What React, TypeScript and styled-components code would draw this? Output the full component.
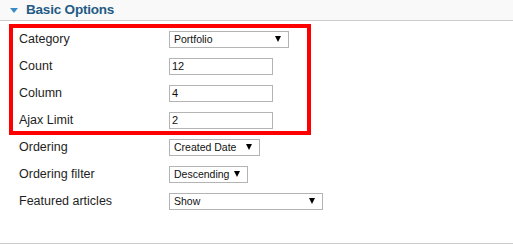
import React from 'react';
import styled, { createGlobalStyle } from 'styled-components';

const GlobalStyle = createGlobalStyle`
  html, body {
    margin: 0;
    padding: 0;
    background: #ffffff;
    font-family: 'Liberation Sans', Arial, sans-serif;
  }
`;

type Field =
  | { label: string; kind: 'select'; value: string; width: number }
  | { label: string; kind: 'input'; value: string; width: number };

const highlighted: Field[] = [
  { label: 'Category', kind: 'select', value: 'Portfolio', width: 120 },
  { label: 'Count', kind: 'input', value: '12', width: 104 },
  { label: 'Column', kind: 'input', value: '4', width: 104 },
  { label: 'Ajax Limit', kind: 'input', value: '2', width: 104 },
];

const others: Field[] = [
  { label: 'Ordering', kind: 'select', value: 'Created Date', width: 91 },
  { label: 'Ordering filter', kind: 'select', value: 'Descending', width: 79 },
  { label: 'Featured articles', kind: 'select', value: 'Show', width: 154 },
];

const FieldRow: React.FC<{ field: Field }> = ({ field }) => (
  <Row>
    <Label>{field.label}</Label>
    {field.kind === 'select' ? (
      <Select width={field.width}>
        <span>{field.value}</span>
        <Arrow />
      </Select>
    ) : (
      <TextInput width={field.width}>{field.value}</TextInput>
    )}
  </Row>
);

const App: React.FC = () => (
  <>
    <GlobalStyle />
    <Panel>
      <Header>
        <Caret />
        <Title>Basic Options</Title>
      </Header>
      <Body>
        <Highlight>
          {highlighted.map((f) => (
            <FieldRow key={f.label} field={f} />
          ))}
        </Highlight>
        <Plain>
          {others.map((f) => (
            <FieldRow key={f.label} field={f} />
          ))}
        </Plain>
      </Body>
    </Panel>
  </>
);

export default App;

const Panel = styled.div`
  width: 513px;
  height: 243px;
  border-bottom: 1px solid #cccccc;
  display: flex;
  flex-direction: column;
`;

const Header = styled.div`
  height: 20px;
  background: #f9f9f9;
  border-bottom: 1px solid #cccccc;
  display: flex;
  align-items: center;
  padding-left: 10px;
  gap: 8px;
`;

const Caret = styled.span`
  width: 0;
  height: 0;
  border-left: 4px solid transparent;
  border-right: 4px solid transparent;
  border-top: 5px solid #3b8bc3;
  margin-top: 1px;
`;

const Title = styled.div`
  font-size: 13.5px;
  font-weight: bold;
  color: #1f5b86;
  line-height: 20px;
  letter-spacing: -0.2px;
`;

const Body = styled.div`
  padding-top: 3px;
`;

const Highlight = styled.div`
  margin-left: 9px;
  width: 288px;
  border: 4px solid #ff0000;
  padding-left: 6px;
  display: flex;
  flex-direction: column;
  gap: 5px;
`;

const Plain = styled.div`
  padding-top: 1px;
  padding-left: 19px;
  display: flex;
  flex-direction: column;
  gap: 5px;
`;

const Row = styled.div`
  height: 22px;
  display: flex;
  align-items: center;
`;

const Label = styled.div`
  width: 150px;
  font-size: 12.5px;
  color: #1e1e24;
`;

const Select = styled.div<{ width: number }>`
  box-sizing: border-box;
  width: ${({ width }) => width}px;
  height: 17px;
  border: 1px solid #b4b4b4;
  background: #ffffff;
  display: flex;
  align-items: center;
  justify-content: space-between;
  padding: 0 7px 0 4px;
  font-size: 10.5px;
  color: #111111;
`;

const Arrow = styled.span`
  width: 0;
  height: 0;
  border-left: 3px solid transparent;
  border-right: 3px solid transparent;
  border-top: 6px solid #000000;
`;

const TextInput = styled.div<{ width: number }>`
  box-sizing: border-box;
  width: ${({ width }) => width}px;
  height: 17px;
  border: 1px solid #b4b4b4;
  background: #ffffff;
  display: flex;
  align-items: center;
  padding-left: 2px;
  font-size: 11px;
  color: #111111;
`;
